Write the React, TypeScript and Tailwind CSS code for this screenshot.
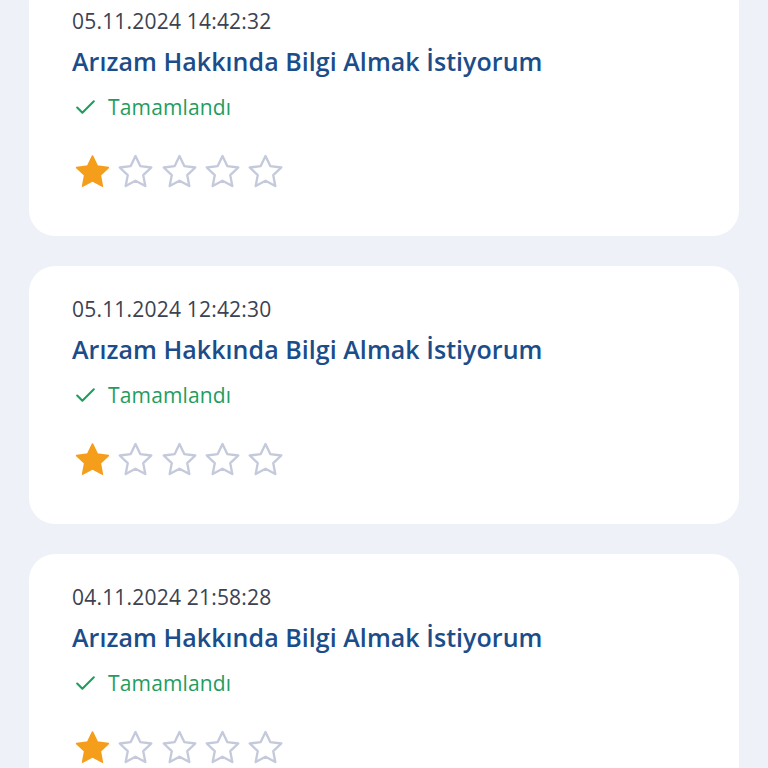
import { Check } from 'lucide-react'

// Support request history
const requests = [
  { id: 1, date: '05.11.2024 14:42:32', title: 'Arızam Hakkında Bilgi Almak İstiyorum', status: 'Tamamlandı', rating: 1 },
  { id: 2, date: '05.11.2024 12:42:30', title: 'Arızam Hakkında Bilgi Almak İstiyorum', status: 'Tamamlandı', rating: 1 },
  { id: 3, date: '04.11.2024 21:58:28', title: 'Arızam Hakkında Bilgi Almak İstiyorum', status: 'Tamamlandı', rating: 1 },
]

function Star({ filled }: { filled: boolean }) {
  return (
    <svg width="33" height="33" viewBox="2.5 2.2 19 19" className="shrink-0 overflow-visible">
      <path
        d="M12 2.8l2.75 5.8 6.35.8-4.65 4.4 1.2 6.3L12 17l-5.65 3.1 1.2-6.3L2.9 9.4l6.35-.8z"
        fill={filled ? '#f59e1b' : 'none'}
        stroke={filled ? '#f59e1b' : '#c4cadb'}
        strokeWidth={filled ? 1 : 1.35}
        strokeLinejoin="round"
      />
    </svg>
  )
}

export default function App() {
  return (
    <main
      className="h-[768px] overflow-hidden bg-[#eef1f8]"
      style={{ fontFamily: '"Open Sans", "Noto Sans", sans-serif' }}
    >
      <div className="-mt-[22px] px-[29px] flex flex-col gap-[30px]">
        {requests.map(req => (
          <div key={req.id} className="bg-white rounded-[26px] h-[258px] pl-[43px] pt-[29px]">
            <div className="text-[21px] leading-[28px] tracking-[0.2px] text-[#3c4250]">{req.date}</div>
            <div className="mt-[10px] text-[25px] leading-[32px] font-semibold tracking-[0.05px] text-[#1b4d8a]">
              {req.title}
            </div>
            <div className="mt-[16px] flex items-center gap-[10px] text-[21px] leading-[28px] tracking-[0.15px] text-[#1f9d5f]">
              <Check className="w-[25px] h-[25px] ml-[1px]" strokeWidth={2} />
              {req.status}
            </div>
            <div className="mt-[34px] flex items-center gap-[10.3px] ml-[4px]">
              {[1, 2, 3, 4, 5].map(i => (
                <Star key={i} filled={i <= req.rating} />
              ))}
            </div>
          </div>
        ))}
      </div>
    </main>
  )
}
